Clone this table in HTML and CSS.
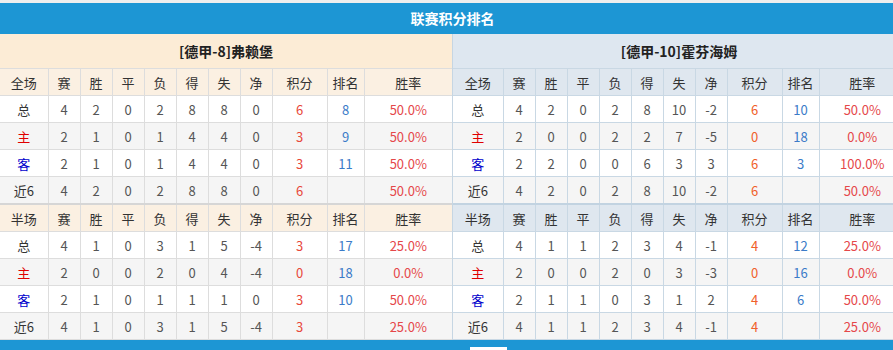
FILE: index.html
```html
<!DOCTYPE html>
<html lang="zh-CN">
<head>
    <meta charset="UTF-8">
    <title>联赛积分排名</title>
    <link rel="stylesheet" href="styles.css">
</head>
<body>
    <div class="top-strip"></div>
    <div class="title-bar">联赛积分排名</div>
    <div class="standings">
        <div class="team home">
            <div class="team-name">[德甲-8]弗赖堡</div>
            <table>
                <colgroup><col class="c-label"><col class="c-num"><col class="c-num"><col class="c-num"><col class="c-num"><col class="c-num"><col class="c-num"><col class="c-num"><col class="c-pts"><col class="c-rank"><col></colgroup>
                <tr class="head"><td>全场</td><td>赛</td><td>胜</td><td>平</td><td>负</td><td>得</td><td>失</td><td>净</td><td>积分</td><td>排名</td><td>胜率</td></tr>
                <tr><td>总</td><td>4</td><td>2</td><td>0</td><td>2</td><td>8</td><td>8</td><td>0</td><td class="pts">6</td><td class="rank">8</td><td class="rate">50.0%</td></tr>
                <tr class="alt"><td class="h">主</td><td>2</td><td>1</td><td>0</td><td>1</td><td>4</td><td>4</td><td>0</td><td class="pts">3</td><td class="rank">9</td><td class="rate">50.0%</td></tr>
                <tr><td class="a">客</td><td>2</td><td>1</td><td>0</td><td>1</td><td>4</td><td>4</td><td>0</td><td class="pts">3</td><td class="rank">11</td><td class="rate">50.0%</td></tr>
                <tr class="alt"><td>近6</td><td>4</td><td>2</td><td>0</td><td>2</td><td>8</td><td>8</td><td>0</td><td class="pts">6</td><td class="rank"></td><td class="rate">50.0%</td></tr>
                <tr class="head split"><td>半场</td><td>赛</td><td>胜</td><td>平</td><td>负</td><td>得</td><td>失</td><td>净</td><td>积分</td><td>排名</td><td>胜率</td></tr>
                <tr><td>总</td><td>4</td><td>1</td><td>0</td><td>3</td><td>1</td><td>5</td><td>-4</td><td class="pts">3</td><td class="rank">17</td><td class="rate">25.0%</td></tr>
                <tr class="alt"><td class="h">主</td><td>2</td><td>0</td><td>0</td><td>2</td><td>0</td><td>4</td><td>-4</td><td class="pts">0</td><td class="rank">18</td><td class="rate">0.0%</td></tr>
                <tr><td class="a">客</td><td>2</td><td>1</td><td>0</td><td>1</td><td>1</td><td>1</td><td>0</td><td class="pts">3</td><td class="rank">10</td><td class="rate">50.0%</td></tr>
                <tr class="alt"><td>近6</td><td>4</td><td>1</td><td>0</td><td>3</td><td>1</td><td>5</td><td>-4</td><td class="pts">3</td><td class="rank"></td><td class="rate">25.0%</td></tr>
            </table>
        </div>
        <div class="team away">
            <div class="team-name">[德甲-10]霍芬海姆</div>
            <table>
                <colgroup><col class="c-label-r"><col class="c-num"><col class="c-num"><col class="c-num"><col class="c-num"><col class="c-num"><col class="c-num"><col class="c-num"><col class="c-pts"><col class="c-rank"><col></colgroup>
                <tr class="head"><td>全场</td><td>赛</td><td>胜</td><td>平</td><td>负</td><td>得</td><td>失</td><td>净</td><td>积分</td><td>排名</td><td>胜率</td></tr>
                <tr><td>总</td><td>4</td><td>2</td><td>0</td><td>2</td><td>8</td><td>10</td><td>-2</td><td class="pts">6</td><td class="rank">10</td><td class="rate">50.0%</td></tr>
                <tr class="alt"><td class="h">主</td><td>2</td><td>0</td><td>0</td><td>2</td><td>2</td><td>7</td><td>-5</td><td class="pts">0</td><td class="rank">18</td><td class="rate">0.0%</td></tr>
                <tr><td class="a">客</td><td>2</td><td>2</td><td>0</td><td>0</td><td>6</td><td>3</td><td>3</td><td class="pts">6</td><td class="rank">3</td><td class="rate">100.0%</td></tr>
                <tr class="alt"><td>近6</td><td>4</td><td>2</td><td>0</td><td>2</td><td>8</td><td>10</td><td>-2</td><td class="pts">6</td><td class="rank"></td><td class="rate">50.0%</td></tr>
                <tr class="head split"><td>半场</td><td>赛</td><td>胜</td><td>平</td><td>负</td><td>得</td><td>失</td><td>净</td><td>积分</td><td>排名</td><td>胜率</td></tr>
                <tr><td>总</td><td>4</td><td>1</td><td>1</td><td>2</td><td>3</td><td>4</td><td>-1</td><td class="pts">4</td><td class="rank">12</td><td class="rate">25.0%</td></tr>
                <tr class="alt"><td class="h">主</td><td>2</td><td>0</td><td>0</td><td>2</td><td>0</td><td>3</td><td>-3</td><td class="pts">0</td><td class="rank">16</td><td class="rate">0.0%</td></tr>
                <tr><td class="a">客</td><td>2</td><td>1</td><td>1</td><td>0</td><td>3</td><td>1</td><td>2</td><td class="pts">4</td><td class="rank">6</td><td class="rate">50.0%</td></tr>
                <tr class="alt"><td>近6</td><td>4</td><td>1</td><td>1</td><td>2</td><td>3</td><td>4</td><td>-1</td><td class="pts">4</td><td class="rank"></td><td class="rate">25.0%</td></tr>
            </table>
        </div>
    </div>
    <div class="bottom-bar"><span class="tab"></span></div>
</body>
</html>
```

FILE: styles.css
```css
body {
    margin: 0;
    padding: 0;
    width: 905px;
    overflow: hidden;
    background: #fff;
    font-family: "Microsoft YaHei", "Noto Sans CJK SC", sans-serif;
    font-size: 13px;
    color: #333;
}
.top-strip {
    height: 3px;
    background: #eeeeee;
}
.title-bar {
    height: 31px;
    line-height: 31px;
    background: #1d96d4;
    color: #fff;
    font-size: 14px;
    font-weight: bold;
    text-align: center;
}
.standings {
    display: flex;
}
.team {
    width: 452px;
}
.team.away {
    width: 452px;
    border-left: 1px solid #c6d6e3;
}
.team-name {
    height: 34px;
    line-height: 34px;
    text-align: center;
    font-size: 14px;
    font-weight: bold;
    color: #222;
}
.home .team-name {
    background: #fcecd6;
}
.away .team-name {
    background: #dee7f0;
}
table {
    width: 100%;
    border-collapse: collapse;
    table-layout: fixed;
}
td {
    height: 26px;
    padding: 0;
    text-align: center;
    color: #555;
    border: 1px solid #dddddd;
}
.away td {
    border-color: #c9d8e4;
}
td:first-child {
    border-left: none;
    color: #333;
}
td:last-child {
    border-right: none;
}
.c-label { width: 48px; }
.c-label-r { width: 50px; }
.c-num { width: 32px; }
.c-pts { width: 55px; }
.c-rank { width: 37px; }
tr.head td {
    color: #333;
}
.home tr.head td {
    background: #fbf0e2;
}
.away tr.head td {
    background: #dfe7ef;
}
tr.split td {
    border-top: 2px solid #d6d6d6;
}
.away tr.split td {
    border-top-color: #c2d3e1;
}
tr.alt td {
    background: #f5f5f5;
}
td.h {
    color: #e00000;
}
td.a {
    color: #0000cc;
}
td.pts {
    color: #e8483a;
}
.away td.pts {
    color: #f0602a;
}
td.rank {
    color: #3b7bc8;
}
td.rate {
    color: #e5474a;
}
.bottom-bar {
    height: 10px;
    background: #1d96d4;
    position: relative;
}
.bottom-bar .tab {
    position: absolute;
    left: 470px;
    top: 7px;
    width: 37px;
    height: 10px;
    background: #fff;
}
```
